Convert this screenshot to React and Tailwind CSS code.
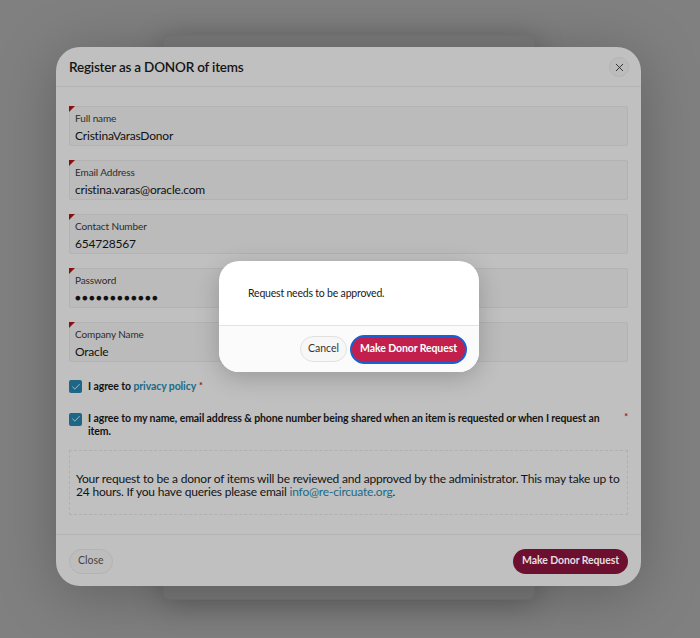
import { Check, X } from 'lucide-react';

const fields = [
    { label: 'Full name', value: 'CristinaVarasDonor' },
    { label: 'Email Address', value: 'cristina.varas@oracle.com' },
    { label: 'Contact Number', value: '654728567' },
    { label: 'Password', value: '●●●●●●●●●●●●', secret: true },
    { label: 'Company Name', value: 'Oracle' },
];

function Field({ label, value, secret }) {
    return (
        <div className="relative h-[40px] rounded-[2px] border border-[#b3b3b3] bg-[#bbbbbb] px-[5px] pt-[5px]">
            {/* required marker */}
            <span className="absolute -left-px -top-px h-0 w-0 border-t-[6px] border-r-[6px] border-t-[#8a0f0f] border-r-transparent" />
            <div className="text-[10px] leading-[13px] tracking-[-0.1px] text-[#2b2b2b]">{label}</div>
            <div className={`mt-[1px] leading-[19px] text-[#111] ${secret ? 'text-[9.5px] tracking-[1.3px]' : 'text-[12px] tracking-[-0.2px]'}`}>{value}</div>
        </div>
    );
}

function Checkbox() {
    return (
        <span className="flex h-[13px] w-[13px] shrink-0 items-center justify-center rounded-[2px] bg-[#1f6585]">
            <Check size={10} strokeWidth={2} className="text-[#b9d3de]" />
        </span>
    );
}

export default function App() {
    return (
        <div className="relative h-[638px] w-[700px] overflow-hidden bg-[#808080]" style={{ fontFamily: 'Lato, "Noto Sans", sans-serif' }}>
            {/* page card behind the overlay */}
            <div className="ml-[163px] mt-[35px] h-[565px] w-[372px] rounded-[6px] border border-[#777] bg-[#7a7a7a] shadow-[0_4px_30px_rgba(0,0,0,0.25)]" />

            {/* register modal */}
            <div className="absolute left-[56px] top-[47px] flex h-[539px] w-[585px] flex-col rounded-[24px] bg-[#c0c0c0] shadow-[0_8px_60px_rgba(0,0,0,0.25)]">
                <div className="flex h-[40px] items-center justify-between border-b border-[#b4b4b4] pl-[13px] pr-[12px] pt-[1px]">
                    <h2 className="text-[13.5px] font-semibold tracking-[-0.2px] text-[#141414]">Register as a DONOR of items</h2>
                    <button className="flex h-[20px] w-[20px] items-center justify-center rounded-full border border-[#b3b3b3] bg-[#bcbcbc]">
                        <X size={13} strokeWidth={1.6} className="text-[#222]" />
                    </button>
                </div>

                <div className="flex flex-1 flex-col px-[13px] pt-[19px]">
                    <div className="flex flex-col gap-[14px]">
                        {fields.map((f) => (
                            <Field key={f.label} {...f} />
                        ))}
                    </div>

                    <div className="mt-[17px] flex items-center gap-[6px] text-[10.5px] font-bold tracking-[-0.1px] text-[#141414]">
                        <Checkbox />
                        <span>
                            I agree to <span className="text-[#1c6a86]">privacy policy</span>
                            <span className="ml-[3px] align-top text-[9px] text-[#9a1010]">*</span>
                        </span>
                    </div>

                    <div className="mt-[17px] flex items-start gap-[6px] text-[10.5px] font-bold leading-[13px] tracking-[-0.1px] text-[#141414]">
                        <span className="mt-[1px]"><Checkbox /></span>
                        <span className="w-[530px]">
                            I agree to my name, email address &amp; phone number being shared when an item is requested or when I request an item.
                        </span>
                        <span className="ml-[2px] text-[9px] leading-[10px] text-[#9a1010]">*</span>
                    </div>

                    <div className="mt-[12px] flex h-[65px] items-center border border-dashed border-[#b0b0b0] px-[6px] pt-[5px] text-[12px] leading-[13px] tracking-[-0.2px] text-[#141414]">
                        <p>
                            Your request to be a donor of items will be reviewed and approved by the administrator. This may take up to 24 hours. If you have queries please email <span className="text-[#1c6a86]">info@re-circuate.org</span>.
                        </p>
                    </div>
                </div>

                <div className="flex h-[52px] items-center justify-between border-t border-[#b4b4b4] px-[13px] pt-[1px]">
                    <button className="h-[25px] rounded-full border border-[#b3b3b3] bg-[#bdbdbd] px-[8px] text-[10.5px] text-[#444]">Close</button>
                    <button className="h-[25px] rounded-full bg-[#6d102f] px-[9px] text-[10.5px] font-bold tracking-[-0.1px] text-[#e6dde0]">Make Donor Request</button>
                </div>
            </div>

            {/* confirm dialog */}
            <div className="absolute left-[219px] top-[261px] flex h-[111px] w-[260px] flex-col overflow-hidden rounded-[20px] bg-white shadow-[0_6px_24px_rgba(0,0,0,0.2)]">
                <div className="flex h-[65px] items-center border-b border-[#e2e2e2] pl-[29px] pt-[2px] text-[10.5px] tracking-[-0.2px] text-[#1a1a1a]">
                    Request needs to be approved.
                </div>
                <div className="flex flex-1 items-center justify-end gap-[3px] bg-[#fbfbfb] pr-[12px]">
                    <button className="h-[26px] rounded-full border border-[#e0e0e0] bg-[#f7f7f7] px-[7px] text-[10.5px] text-[#333]">Cancel</button>
                    <button className="h-[29px] rounded-full border-[2px] border-[#1562d6] bg-[#c21f4c] px-[8px] text-[10.5px] font-bold tracking-[-0.1px] text-white">Make Donor Request</button>
                </div>
            </div>
        </div>
    );
}
